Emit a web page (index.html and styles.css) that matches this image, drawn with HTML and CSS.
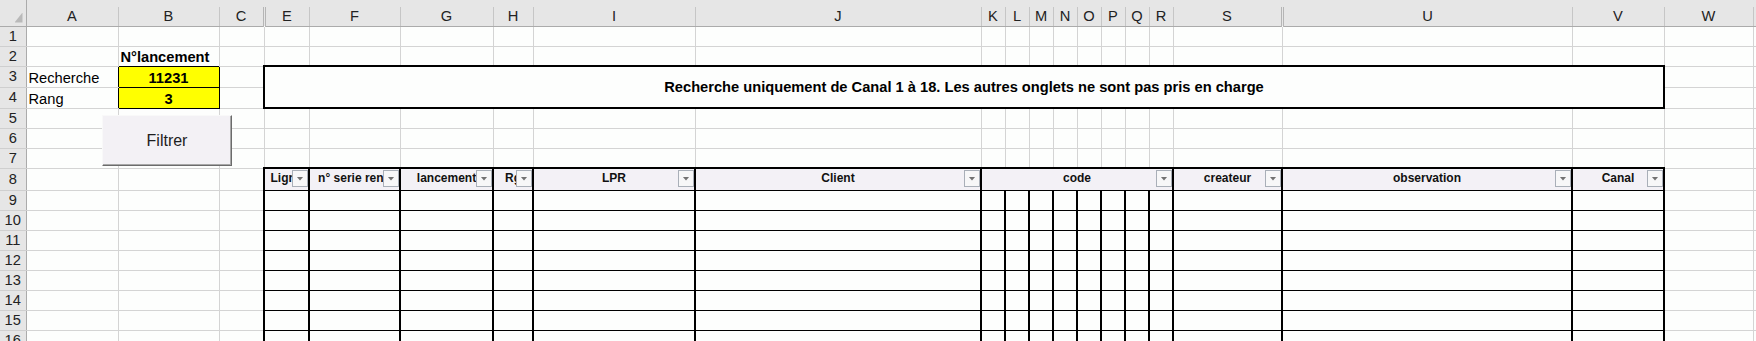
FILE: index.html
```html
<!DOCTYPE html>
<html lang="fr">
<head>
<meta charset="utf-8">
<title>Recherche lancement</title>
<link rel="stylesheet" href="styles.css">
</head>
<body>
<div class="sheet">
<table class="grid">
<colgroup>
<col class="w-rh"><col class="w-a"><col class="w-b"><col class="w-c"><col class="w-e"><col class="w-f"><col class="w-g"><col class="w-h"><col class="w-i"><col class="w-j">
<col class="w-k"><col class="w-k"><col class="w-k"><col class="w-k"><col class="w-k"><col class="w-k"><col class="w-k"><col class="w-k">
<col class="w-s"><col class="w-u"><col class="w-v"><col class="w-w"><col class="w-x">
</colgroup>
<tbody>
<tr class="strip"><th class="corner" rowspan="2"><span class="tri"></span></th><td class="topbar" colspan="22"></td></tr>
<tr class="letters"><th>A</th><th>B</th><th class="hid">C</th><th>E</th><th>F</th><th>G</th><th>H</th><th>I</th><th>J</th><th>K</th><th>L</th><th>M</th><th>N</th><th>O</th><th>P</th><th>Q</th><th>R</th><th class="hid">S</th><th>U</th><th>V</th><th>W</th><th></th></tr>
<tr class="h20"><th>1</th><td></td><td></td><td></td><td></td><td></td><td></td><td></td><td></td><td></td><td></td><td></td><td></td><td></td><td></td><td></td><td></td><td></td><td></td><td></td><td></td><td></td><td></td></tr>
<tr class="h20"><th>2</th><td></td><td class="nb bold">N°lancement</td><td></td><td></td><td></td><td></td><td></td><td></td><td></td><td></td><td></td><td></td><td></td><td></td><td></td><td></td><td></td><td></td><td></td><td></td><td></td><td></td></tr>
<tr class="h21"><th>3</th><td class="nr">Recherche</td><td class="yel">11231</td><td></td><td class="banner" colspan="17" rowspan="2">Recherche uniquement de Canal 1 à 18. Les autres onglets ne sont pas pris en charge</td><td></td><td></td></tr>
<tr class="h21"><th>4</th><td class="nr">Rang</td><td class="yel">3</td><td></td><td></td><td></td></tr>
<tr class="h20"><th>5</th><td></td><td></td><td></td><td></td><td></td><td></td><td></td><td></td><td></td><td></td><td></td><td></td><td></td><td></td><td></td><td></td><td></td><td></td><td></td><td></td><td></td><td></td></tr>
<tr class="h20"><th>6</th><td></td><td></td><td></td><td></td><td></td><td></td><td></td><td></td><td></td><td></td><td></td><td></td><td></td><td></td><td></td><td></td><td></td><td></td><td></td><td></td><td></td><td></td></tr>
<tr class="h20"><th>7</th><td></td><td></td><td></td><td></td><td></td><td></td><td></td><td></td><td></td><td></td><td></td><td></td><td></td><td></td><td></td><td></td><td></td><td></td><td></td><td></td><td></td><td></td></tr>
<tr class="h22"><th>8</th><td></td><td></td><td></td>
<td class="fh"><div class="hd">Ligne<span class="dd"></span></div></td>
<td class="fh"><div class="hd">n° serie rend<span class="dd"></span></div></td>
<td class="fh"><div class="hd">lancement<span class="dd"></span></div></td>
<td class="fh"><div class="hd">Rg<span class="dd"></span></div></td>
<td class="fh"><div class="hd">LPR<span class="dd"></span></div></td>
<td class="fh"><div class="hd">Client<span class="dd"></span></div></td>
<td class="fh" colspan="8"><div class="hd">code<span class="dd"></span></div></td>
<td class="fh"><div class="hd">createur<span class="dd"></span></div></td>
<td class="fh"><div class="hd">observation<span class="dd"></span></div></td>
<td class="fh"><div class="hd">Canal<span class="dd"></span></div></td>
<td></td><td></td></tr>
<tr class="h20"><th>9</th><td></td><td></td><td></td><td class="t"></td><td class="t"></td><td class="t"></td><td class="t"></td><td class="t"></td><td class="t"></td><td class="t"></td><td class="t"></td><td class="t"></td><td class="t"></td><td class="t"></td><td class="t"></td><td class="t"></td><td class="t"></td><td class="t"></td><td class="t"></td><td class="t"></td><td></td><td></td></tr>
<tr class="h20"><th>10</th><td></td><td></td><td></td><td class="t"></td><td class="t"></td><td class="t"></td><td class="t"></td><td class="t"></td><td class="t"></td><td class="t"></td><td class="t"></td><td class="t"></td><td class="t"></td><td class="t"></td><td class="t"></td><td class="t"></td><td class="t"></td><td class="t"></td><td class="t"></td><td class="t"></td><td></td><td></td></tr>
<tr class="h20"><th>11</th><td></td><td></td><td></td><td class="t"></td><td class="t"></td><td class="t"></td><td class="t"></td><td class="t"></td><td class="t"></td><td class="t"></td><td class="t"></td><td class="t"></td><td class="t"></td><td class="t"></td><td class="t"></td><td class="t"></td><td class="t"></td><td class="t"></td><td class="t"></td><td class="t"></td><td></td><td></td></tr>
<tr class="h20"><th>12</th><td></td><td></td><td></td><td class="t"></td><td class="t"></td><td class="t"></td><td class="t"></td><td class="t"></td><td class="t"></td><td class="t"></td><td class="t"></td><td class="t"></td><td class="t"></td><td class="t"></td><td class="t"></td><td class="t"></td><td class="t"></td><td class="t"></td><td class="t"></td><td class="t"></td><td></td><td></td></tr>
<tr class="h20"><th>13</th><td></td><td></td><td></td><td class="t"></td><td class="t"></td><td class="t"></td><td class="t"></td><td class="t"></td><td class="t"></td><td class="t"></td><td class="t"></td><td class="t"></td><td class="t"></td><td class="t"></td><td class="t"></td><td class="t"></td><td class="t"></td><td class="t"></td><td class="t"></td><td class="t"></td><td></td><td></td></tr>
<tr class="h20"><th>14</th><td></td><td></td><td></td><td class="t"></td><td class="t"></td><td class="t"></td><td class="t"></td><td class="t"></td><td class="t"></td><td class="t"></td><td class="t"></td><td class="t"></td><td class="t"></td><td class="t"></td><td class="t"></td><td class="t"></td><td class="t"></td><td class="t"></td><td class="t"></td><td class="t"></td><td></td><td></td></tr>
<tr class="h20"><th>15</th><td></td><td></td><td></td><td class="t"></td><td class="t"></td><td class="t"></td><td class="t"></td><td class="t"></td><td class="t"></td><td class="t"></td><td class="t"></td><td class="t"></td><td class="t"></td><td class="t"></td><td class="t"></td><td class="t"></td><td class="t"></td><td class="t"></td><td class="t"></td><td class="t"></td><td></td><td></td></tr>
<tr class="h20"><th>16</th><td></td><td></td><td></td><td class="t"></td><td class="t"></td><td class="t"></td><td class="t"></td><td class="t"></td><td class="t"></td><td class="t"></td><td class="t"></td><td class="t"></td><td class="t"></td><td class="t"></td><td class="t"></td><td class="t"></td><td class="t"></td><td class="t"></td><td class="t"></td><td class="t"></td><td></td><td></td></tr>
</tbody>
</table>
<div class="btn">Filtrer</div>
</div>
</body>
</html>
```

FILE: styles.css
```css
html, body {
  margin: 0;
  padding: 0;
}
body {
  background: #fdfefd;
  overflow: hidden;
  font-family: "Liberation Sans", Arial, sans-serif;
  color: #000;
}
.sheet {
  position: relative;
  width: 1756px;
  height: 341px;
  overflow: hidden;
}
.grid {
  border-collapse: collapse;
  table-layout: fixed;
  width: 1793px;
  font-size: 14.6667px;
}
.w-rh { width: 26px; }
.w-a { width: 92px; }
.w-b { width: 101px; }
.w-c { width: 45px; }
.w-e { width: 45px; }
.w-f { width: 91px; }
.w-g { width: 93px; }
.w-h { width: 40px; }
.w-i { width: 162px; }
.w-j { width: 286px; }
.w-k { width: 24px; }
.w-s { width: 109px; }
.w-u { width: 290px; }
.w-v { width: 92px; }
.w-w { width: 89px; }
.w-x { width: 40px; }

.strip { height: 7px; }
.letters { height: 19px; }
.h20 { height: 20px; }
.h21 { height: 21px; }
.h22 { height: 22px; }

.grid td {
  border-right: 1px solid #d4d4d4;
  border-bottom: 1px solid #d4d4d4;
  padding: 0 2px;
  vertical-align: bottom;
  line-height: 17px;
  white-space: nowrap;
  overflow: hidden;
}
.grid th {
  font-weight: normal;
  background: #e6e6e6;
  color: #222;
  padding: 0;
  line-height: 17px;
  text-align: center;
  vertical-align: middle;
  border-right: 1px solid #ababab;
  border-bottom: 1px solid #cfcfcf;
}
.grid td.topbar {
  background: #e6e6e6;
  border: none;
  padding: 0;
}
.grid th.corner {
  border-bottom: 1px solid #ababab;
  border-right: 1px solid #ababab;
  text-align: right;
  vertical-align: bottom;
  padding: 0 3px 3px 0;
  line-height: 0;
}
.tri {
  display: inline-block;
  width: 8px;
  height: 10px;
  background: #b9b9b9;
  clip-path: polygon(100% 0, 100% 100%, 0 100%);
}
.letters th {
  border-right: 1px solid #c6c6c6;
  border-bottom: 1px solid #ababab;
}
.letters th.hid {
  border-right: 3px double #b5b5b5;
}

.grid td.nb { border-bottom: none; }
.grid td.nr { border-right: none; }
.bold { font-weight: bold; }
.grid td.yel {
  background: #ffff00;
  border: 1px solid #000;
  text-align: center;
  font-weight: bold;
}
.grid td.banner {
  border: 2px solid #000;
  text-align: center;
  vertical-align: middle;
  font-weight: bold;
}
.grid td.fh {
  border: 2px solid #000;
  border-bottom: 1px solid #000;
  background: #f3f1f6;
  padding: 0;
  vertical-align: top;
}
.hd {
  position: relative;
  height: 19px;
  line-height: 19px;
  text-align: center;
  overflow: hidden;
  white-space: nowrap;
  font-size: 12px;
  font-weight: bold;
  color: #111;
}
.dd {
  position: absolute;
  right: 0;
  top: 1px;
  width: 16px;
  height: 17px;
  box-sizing: border-box;
  border: 1px solid #a9afb8;
  background: #f7f7f8;
  display: flex;
  align-items: center;
  justify-content: center;
}
.dd::after {
  content: "";
  width: 7px;
  height: 4px;
  background: #727272;
  clip-path: polygon(0 0, 100% 0, 50% 100%);
}
.grid td.t {
  border-left: 2px solid #000;
  border-right: 2px solid #000;
  border-bottom: 1px solid #000;
}

.btn {
  position: absolute;
  left: 102px;
  top: 115px;
  width: 130px;
  height: 51px;
  box-sizing: border-box;
  background: #f3f1f5;
  border: 1px solid;
  border-color: #f9f9f9 #6b6b6b #6b6b6b #f9f9f9;
  box-shadow: inset -1px -1px 0 #a8a8a8;
  font-size: 16px;
  color: #1e1e1e;
  display: flex;
  align-items: center;
  justify-content: center;
}
```
